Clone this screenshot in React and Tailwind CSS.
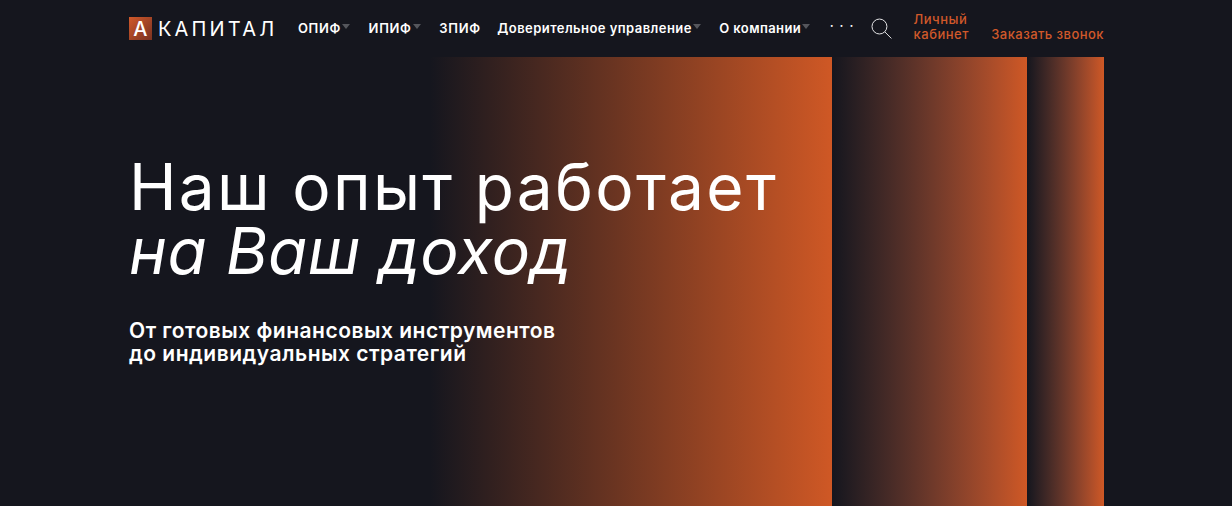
const Caret = () => (
  <span className="ml-[1px] mt-[-4px] inline-block border-x-[4px] border-t-[5px] border-x-transparent border-t-[#55565c]" />
);

const NavItem = ({ label, caret, className }) => (
  <a className={`flex items-center whitespace-nowrap text-[13px] font-semibold text-white ${className}`}>
    {label}
    {caret && <Caret />}
  </a>
);

const SearchIcon = () => (
  <svg className="ml-[19px] h-[21px] w-[21px]" viewBox="0 0 21 21" fill="none" stroke="#e4e4e6" strokeWidth="1">
    <circle cx="8.5" cy="8.5" r="7.5" />
    <path d="M14 14l6.5 6.5" />
  </svg>
);

export default function App() {
  return (
    <div className="h-[506px] overflow-hidden bg-[#15161e] font-['Inter',sans-serif]">
      <div className="ml-[129px] w-[975px]">
        <header className="flex h-[57px] items-center">
          <div className="flex h-[23px] w-[23px] items-center justify-center bg-gradient-to-br from-[#d1592a] to-[#7a3220] text-[20px] font-medium text-white">
            А
          </div>
          <span className="ml-[6px] w-[118px] whitespace-nowrap text-[20px] leading-none tracking-[3.2px] text-white">КАПИТАЛ</span>
          <NavItem label="ОПИФ" caret className="ml-[22px] w-[54px] tracking-[0.7px]" />
          <NavItem label="ИПИФ" caret className="ml-[17px] w-[54px] tracking-[0.7px]" />
          <NavItem label="ЗПИФ" className="ml-[17px] w-[41px] tracking-[0.7px]" />
          <NavItem label="Доверительное управление" caret className="ml-[17px] w-[205px] tracking-[0.45px]" />
          <NavItem label="О компании" caret className="ml-[18px] w-[93px] tracking-[0.42px]" />
          <span className="ml-[18px] mt-[-6px] w-[22px] whitespace-nowrap text-[13px] font-medium tracking-[6px] text-white">···</span>
          <SearchIcon />
          <a className="ml-[22px] w-[60px] self-end pb-[15px] text-[13px] font-medium leading-[15px] tracking-[0.5px] text-[#d1592a]">
            Личный кабинет
          </a>
          <a className="ml-[18px] self-end whitespace-nowrap pb-[15px] text-[13px] font-medium leading-[15px] tracking-[0.45px] text-[#d1592a]">
            Заказать звонок
          </a>
        </header>
        <div className="flex h-[449px]">
          <section className="w-[703px] bg-[linear-gradient(90deg,#15161e_301px,#cf5825_100%)] pt-[98px]">
            <h1 className="text-[64px] font-normal leading-[64px] tracking-[2.3px] text-white">
              Наш опыт работает
              <br />
              <em className="tracking-[0.5px]">на Ваш доход</em>
            </h1>
            <p className="mt-[36px] text-[21px] font-semibold leading-[23px] tracking-[0.5px] text-white">
              От готовых финансовых инструментов
              <br />
              до индивидуальных стратегий
            </p>
          </section>
          <div className="w-[195px] bg-gradient-to-r from-[#15161e] to-[#cf5825]" />
          <div className="w-[77px] bg-gradient-to-r from-[#15161e] to-[#cf5825]" />
        </div>
      </div>
    </div>
  );
}
